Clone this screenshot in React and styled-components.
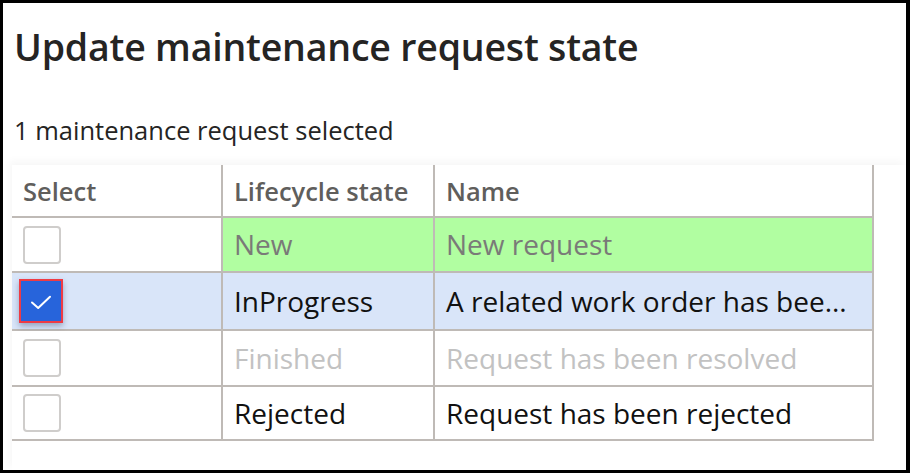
import React from "react";
import styled, { createGlobalStyle } from "styled-components";

const GlobalStyle = createGlobalStyle`
    html, body {
        margin: 0;
        padding: 0;
        background: #ffffff;
    }
    body {
        font-family: "Open Sans", "Noto Sans", sans-serif;
    }
`

const rows = [
    { state: "New", name: "New request", tone: "new", height: 53 },
    { state: "InProgress", name: "A related work order has bee...", tone: "selected", checked: true, height: 56 },
    { state: "Finished", name: "Request has been resolved", tone: "disabled", height: 54 },
    { state: "Rejected", name: "Request has been rejected", tone: "normal", height: 52 },
]

export default function App(){
    return(
        <>
            <GlobalStyle/>
            <Frame>
                <Title>Update maintenance request state</Title>
                <Subtitle>1 maintenance request selected</Subtitle>
                <GridArea>
                    <Grid>
                        <HeaderCell>Select</HeaderCell>
                        <HeaderCell>Lifecycle state</HeaderCell>
                        <HeaderCell>Name</HeaderCell>
                        {rows.map((row) => (
                            <React.Fragment key={row.state}>
                                <SelectCell tone={row.tone} h={row.height}>
                                    {row.checked ? (
                                        <CheckedBox>
                                            <svg width="22" height="15" viewBox="0 0 22 15">
                                                <path d="M2 7.5 L8.2 13 L20 1.8" fill="none" stroke="#ffffff" strokeWidth="2" strokeLinecap="round" strokeLinejoin="round"/>
                                            </svg>
                                        </CheckedBox>
                                    ) : (
                                        <EmptyBox/>
                                    )}
                                </SelectCell>
                                <Cell tone={row.tone} h={row.height}>{row.state}</Cell>
                                <Cell tone={row.tone} h={row.height}>{row.name}</Cell>
                            </React.Fragment>
                        ))}
                    </Grid>
                </GridArea>
            </Frame>
        </>
    )
}

const Frame = styled.div`
    box-sizing: border-box;
    width: 910px;
    height: 473px;
    border-style: solid;
    border-color: #000000;
    border-width: 3px 4px 3px 3px;
    display: flex;
    flex-direction: column;
    overflow: hidden;
`

const Title = styled.h1`
    margin: 20px 0 0 11px;
    font-size: 37.5px;
    line-height: 48px;
    font-weight: 600;
    color: #252423;
    letter-spacing: -0.2px;
`

const Subtitle = styled.div`
    margin: 43px 0 0 11px;
    font-size: 25.5px;
    line-height: 32px;
    color: #252423;
`

const GridArea = styled.div`
    margin: 19px 0 0 9px;
    flex: 1;
    box-shadow: -3px -4px 8px rgba(0, 0, 0, 0.035);
    background: #ffffff;
`

const Grid = styled.div`
    display: grid;
    grid-template-columns: 211px 212px 439px;
    width: 862px;
`

const HeaderCell = styled.div`
    height: 51px;
    border-right: 2px solid #bfbab6;
    border-bottom: 2px solid #bfbab6;
    padding: 0 0 0 11px;
    display: flex;
    align-items: center;
    font-size: 25.5px;
    font-weight: 600;
    color: #605e5c;
`

const toneBg = {
    new: "#b1fea1",
    selected: "#d9e5f9",
    disabled: "#ffffff",
    normal: "#ffffff",
}

const toneColor = {
    new: "#7a7a78",
    selected: "#111111",
    disabled: "#c2c2c2",
    normal: "#111111",
}

const Cell = styled.div`
    height: ${props => props.h}px;
    line-height: ${props => props.h}px;
    border-right: 2px solid #bfbab6;
    border-bottom: 2px solid #bfbab6;
    padding: 0 8px 0 11px;
    min-width: 0;
    background: ${props => toneBg[props.tone]};
    color: ${props => toneColor[props.tone]};
    font-size: 28px;
    white-space: nowrap;
`

const SelectCell = styled.div`
    height: ${props => props.h}px;
    border-right: 2px solid #bfbab6;
    border-bottom: 2px solid #bfbab6;
    padding-left: ${props => props.tone === "selected" ? 7 : 11}px;
    display: flex;
    align-items: center;
    background: ${props => props.tone === "selected" ? "#d9e5f9" : "#ffffff"};
`

const EmptyBox = styled.div`
    box-sizing: border-box;
    width: 38px;
    height: 38px;
    border: 2px solid #cfcdcb;
    border-radius: 4px;
    background: #ffffff;
`

const CheckedBox = styled.div`
    box-sizing: border-box;
    width: 44px;
    height: 44px;
    border: 2.5px solid #ee3b45;
    background: #2764db;
    display: flex;
    align-items: center;
    justify-content: center;
    box-shadow: 0 3px 6px rgba(20, 40, 90, 0.35);
    padding-top: 3px;
`
